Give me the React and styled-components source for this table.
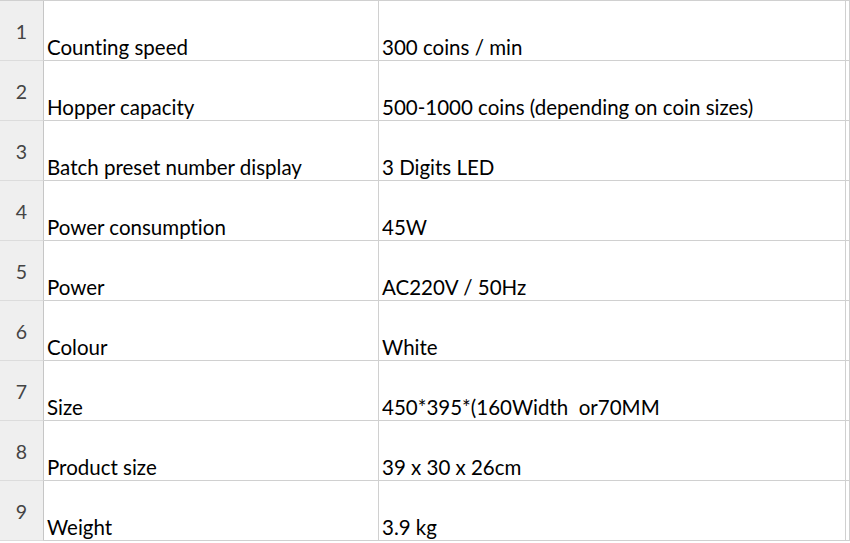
import React from "react";
import styled, { createGlobalStyle } from "styled-components";

const Global = createGlobalStyle`
  html, body { margin: 0; padding: 0; background: #ffffff; overflow: hidden; }
  body {
    font-family: Lato, "Open Sans", sans-serif;
    font-variant-ligatures: none;
    font-feature-settings: "liga" 0, "clig" 0;
  }
`;

const Sheet = styled.div`
  display: grid;
  grid-template-columns: 44px 335px 467px 1fr;
  grid-auto-rows: 60px;
  width: 850px;
  border-top: 1px solid #d0d0d0;
`;

const RowHead = styled.div`
  background: #efefef;
  border-right: 1px solid #c6c6c6;
  border-bottom: 1px solid #dcdcdc;
  display: flex;
  align-items: center;
  justify-content: center;
  padding-top: 2px;
  font-size: 19.5px;
  color: #444444;
`;

const Cell = styled.div`
  border-right: 1px solid #d0d0d0;
  border-bottom: 1px solid #d0d0d0;
  display: flex;
  align-items: flex-end;
  padding: 0 0 1px ${(p) => (p.$pad ? p.$pad : 3)}px;
  font-size: 20.5px;
  color: #000000;
  white-space: pre;
  overflow: visible;
  line-height: 24px;
`;

const rows = [
  ["Counting speed", "300 coins / min"],
  ["Hopper capacity", "500-1000 coins (depending on coin sizes)"],
  ["Batch preset number display", "3 Digits LED"],
  ["Power consumption", "45W"],
  ["Power", "AC220V / 50Hz"],
  ["Colour", "White"],
  ["Size", "450*395*(160Width  or70MM"],
  ["Product size", "39 x 30 x 26cm"],
  ["Weight", "3.9 kg"],
];

export default function App() {
  return (
    <>
      <Global />
      <Sheet>
        {rows.map(([a, b], i) => (
          <React.Fragment key={i}>
            <RowHead>{i + 1}</RowHead>
            <Cell $pad={3}>{a}</Cell>
            <Cell $pad={3}>{b}</Cell>
            <Cell />
          </React.Fragment>
        ))}
      </Sheet>
    </>
  );
}
